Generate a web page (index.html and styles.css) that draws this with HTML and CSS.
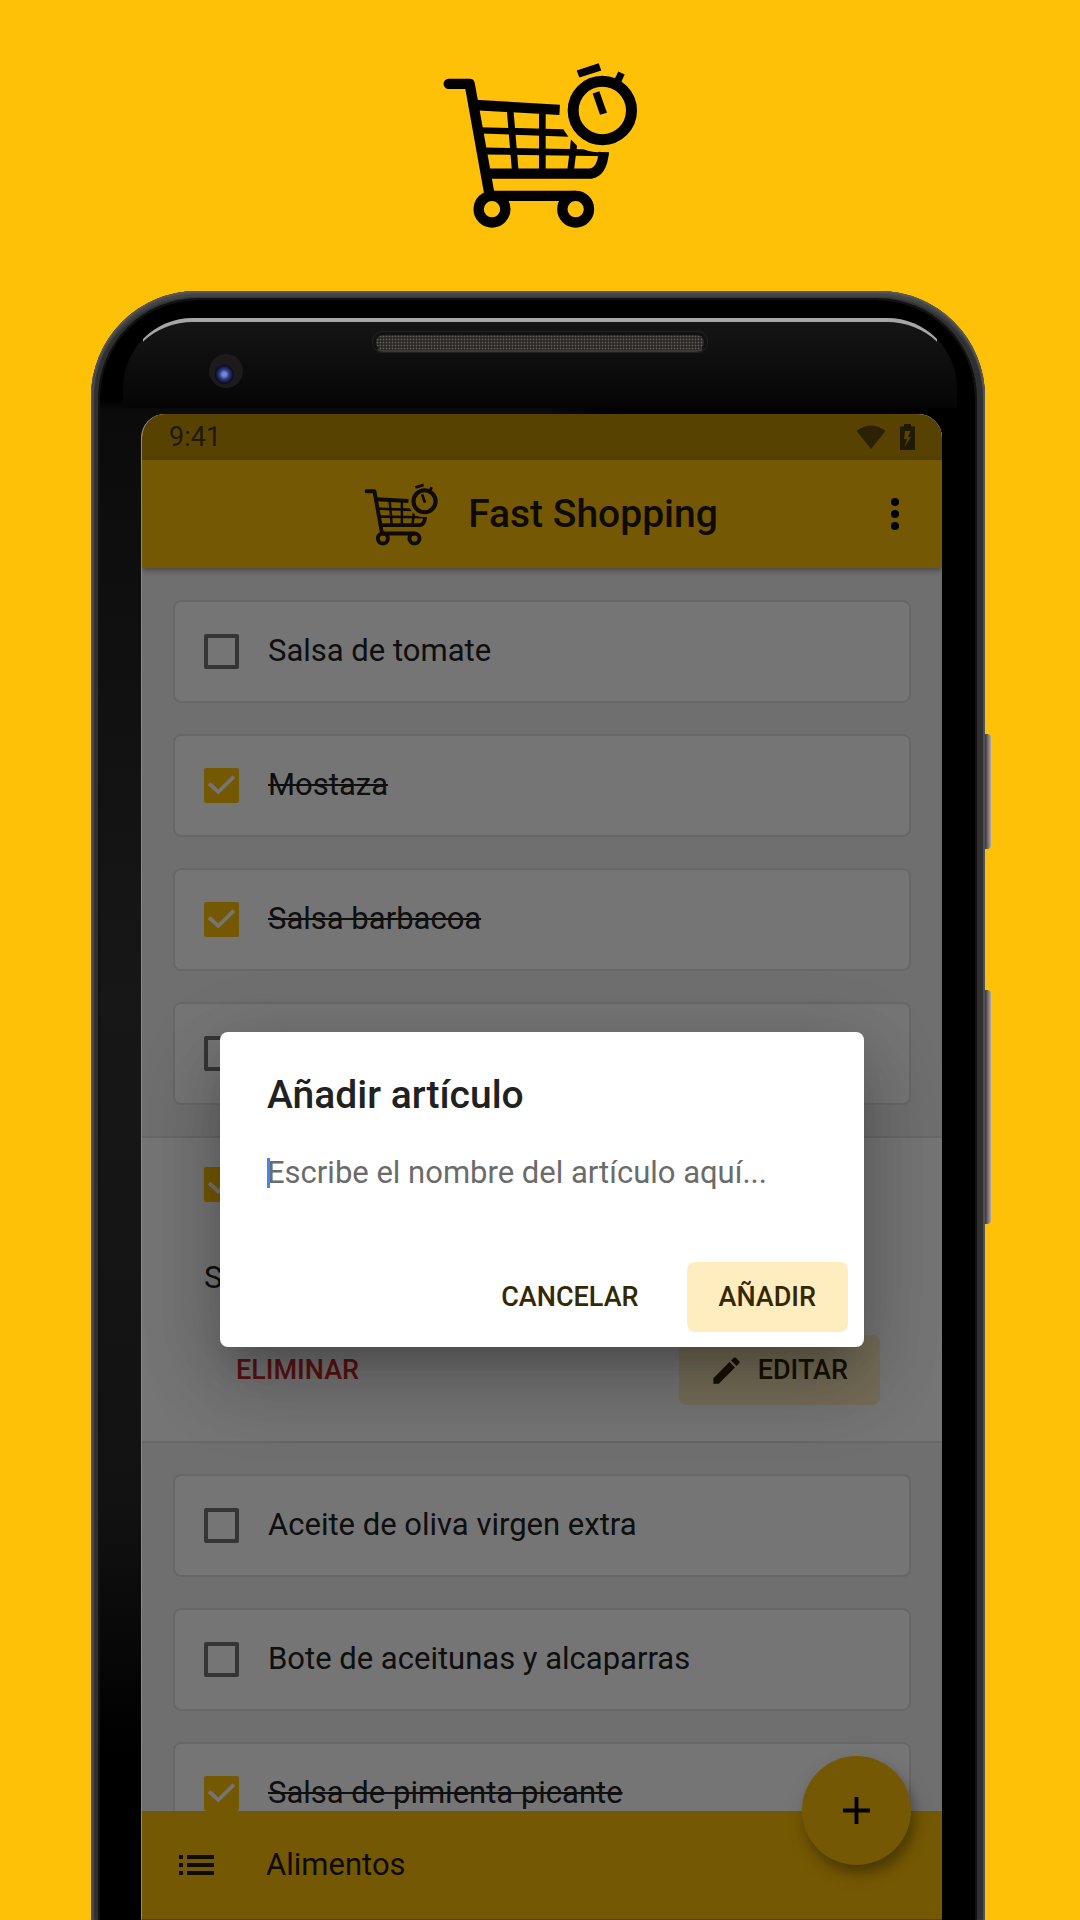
FILE: index.html
```html
<!DOCTYPE html>
<html lang="es">
<head>
<meta charset="utf-8">
<meta name="viewport" content="width=device-width, initial-scale=1">
<title>Fast Shopping</title>
<link rel="stylesheet" href="styles.css">
</head>
<body>
<svg class="defs" aria-hidden="true">
  <symbol id="cart" viewBox="66 36 588 500">
    <g fill="none" stroke="currentColor" stroke-width="31">
      <path d="M86 101H149L207 425" stroke-linecap="round" stroke-linejoin="round"/>
      <path d="M165 164.500L419 179"/>
      <path d="M205 370.500H512Q547 364 551 306"/>
      <path d="M207 437H467"/>
      <circle cx="216" cy="477" r="40"/>
      <circle cx="467" cy="477" r="40"/>
      <circle cx="547" cy="181" r="87.500" stroke-width="33"/>
      <path d="M270 175L286 365M367 180V365" stroke-width="20"/>
    </g>
    <g fill="currentColor">
      <path d="M180 231L430 237L445 260L183 250Z"/>
      <path d="M195 292L490 297Q525 310 567 306L565 318L198 313Z"/>
      <path d="M453 268L471 287L462 360H442Z"/>
      <path d="M470 61L536 39L544 61L478 82Z"/>
      <path d="M595 64L614 73L602 99L582 90Z"/>
      <path d="M518 130L538 123L561 188L540 194Z"/>
    </g>
  </symbol>
</svg>

<header class="brand">
  <svg class="brand-logo" role="img" aria-label="Fast Shopping"><use href="#cart"/></svg>
</header>

<div class="phone">
  <span class="side-key side-key-power"></span>
  <span class="side-key side-key-volume"></span>
  <div class="bezel">
    <div class="glass">
      <span class="speaker"></span>
      <span class="camera"></span>
    </div>

    <div class="screen">
      <div class="status">
        <span>9:41</span>
        <span class="status-icons">
          <svg width="30" height="24" viewBox="0 0 30 24"><path d="M0.500 6Q15-5 29.500 6L15 24Z" fill="currentColor" opacity=".8"/></svg>
          <svg width="15" height="26" viewBox="0 0 15 26"><path fill="currentColor" fill-rule="evenodd" d="M4 0H11V2.500H15V26H0V2.500H4ZM5 7L4 15H7L4.500 23L11 13H8L10.500 7Z"/></svg>
        </span>
      </div>

      <div class="appbar">
        <div class="appbar-title">
          <svg class="appbar-logo" aria-hidden="true"><use href="#cart"/></svg>
          <h1>Fast Shopping</h1>
        </div>
        <button class="menu" aria-label="Más opciones">
          <svg width="8" height="32" viewBox="0 0 8 32"><g fill="currentColor"><circle cx="4" cy="4" r="4"/><circle cx="4" cy="16" r="4"/><circle cx="4" cy="28" r="4"/></g></svg>
        </button>
      </div>

      <ul class="list">
        <li class="card"><label><input type="checkbox"><span>Salsa de tomate</span></label></li>
        <li class="card"><label><input type="checkbox" checked><span>Mostaza</span></label></li>
        <li class="card"><label><input type="checkbox" checked><span>Salsa barbacoa</span></label></li>
        <li class="card"><label><input type="checkbox" aria-label="Artículo"></label></li>
        <li class="open-item">
          <label><input type="checkbox" checked aria-label="Artículo"></label>
          <p>S</p>
          <div class="open-actions">
            <button class="btn btn-danger">ELIMINAR</button>
            <button class="btn btn-tonal btn-icon">
              <svg width="35" height="35" viewBox="0 0 24 24"><path fill="currentColor" d="M3 17.250V21h3.750L17.810 9.940l-3.750-3.750L3 17.250zM20.710 7.040a1 1 0 0 0 0-1.410l-2.340-2.340a1 1 0 0 0-1.410 0l-1.830 1.830 3.750 3.750 1.830-1.830z"/></svg>
              EDITAR
            </button>
          </div>
        </li>
        <li class="card"><label><input type="checkbox"><span>Aceite de oliva virgen extra</span></label></li>
        <li class="card"><label><input type="checkbox"><span>Bote de aceitunas y alcaparras</span></label></li>
        <li class="card"><label><input type="checkbox" checked><span>Salsa de pimienta picante</span></label></li>
      </ul>

      <div class="bottombar">
        <svg width="35" height="20" viewBox="0 0 35 20"><path fill="currentColor" d="M0 0H4V4H0ZM8 0H35V4H8ZM0 8H4V12H0ZM8 8H35V12H8ZM0 16H4V20H0ZM8 16H35V20H8Z"/></svg>
        <span>Alimentos</span>
        <button class="fab" aria-label="Añadir artículo">
          <svg width="27" height="27" viewBox="0 0 28 28"><path d="M14 0V28M0 14H28" stroke="currentColor" stroke-width="4"/></svg>
        </button>
      </div>

      <div class="scrim">
        <form class="dialog" role="dialog" aria-labelledby="dialog-title">
          <h2 id="dialog-title">Añadir artículo</h2>
          <div class="field">
            <span class="caret"></span>
            <input type="text" aria-labelledby="dialog-title" placeholder="Escribe el nombre del artículo aquí...">
          </div>
          <div class="dialog-actions">
            <button type="button" class="btn">CANCELAR</button>
            <button type="button" class="btn btn-tonal">AÑADIR</button>
          </div>
        </form>
      </div>
    </div>
  </div>
</div>
</body>
</html>
```

FILE: styles.css
```css
:root {
  --amber: #ffc107;
  --ink: #212121;
  --line: #e0e0e0;
}

* {
  box-sizing: border-box;
}

body {
  margin: 0;
  height: 100vh;
  display: flex;
  flex-direction: column;
  overflow: hidden;
  background: var(--amber);
  color: var(--ink);
  font-family: Roboto, "Noto Sans", sans-serif;
  font-size: 31px;
  line-height: 40px;
}

h1, h2, p, ul {
  margin: 0;
  padding: 0;
}

h1, h2 {
  font-size: 39px;
  font-weight: 500;
  line-height: 48px;
}

button {
  border: 0;
  background: none;
  font-family: inherit;
  cursor: pointer;
}

svg {
  display: block;
  flex: none;
}

.defs {
  position: absolute;
  width: 0;
  height: 0;
}

.brand {
  display: flex;
  justify-content: center;
  padding: 62px 0;
  color: #000;
}

.brand-logo {
  width: 196px;
  height: 167px;
}

/* Handset */

.phone {
  position: relative;
  flex: 1;
  min-height: 0;
  display: flex;
  margin: 0 95px 0 91px;
  padding: 9px 10px 0 9px;
  border-radius: 106px 106px 0 0;
  background: #303032;
  box-shadow: inset 0 2px 1px #55585a, inset 3px 0 1px #4a4a4a, inset -2px 0 1px #555, inset 0 6px 2px #454647;
}

.side-key {
  position: absolute;
  right: -6px;
  width: 6px;
  border-radius: 0 4px 4px 0;
  background: linear-gradient(90deg, #3a3236, #b8a8a8);
}

.side-key-power {
  top: 443px;
  height: 115px;
}

.side-key-volume {
  top: 699px;
  height: 234px;
}

.bezel {
  flex: 1;
  min-height: 0;
  display: flex;
  flex-direction: column;
  border-radius: 98px 98px 0 0;
  background: linear-gradient(90deg, transparent 50%, #000 60%), linear-gradient(#000 100px, #0b0b0b 110px, #171717 700px, #121212 1200px, #000 1450px);
  box-shadow: 0 0 0 2px #111;
}

.glass {
  position: relative;
  display: flex;
  justify-content: center;
  height: 90px;
  margin: 18px 18px 6px 23px;
  border-radius: 70px 70px 0 0;
  background: linear-gradient(#161616, #050505);
}

.glass::before {
  content: "";
  position: absolute;
  inset: 0;
  border-top: 4px solid #a6a6a6;
  border-radius: 70px 70px 0 0;
  clip-path: inset(0 20px);
}

.speaker {
  width: 334px;
  height: 20px;
  margin-top: 14px;
  border: 3px solid #121212;
  border-bottom: 2px solid #3b3835;
  border-radius: 10px;
  background: radial-gradient(circle, #66605a 0, #12110f 2px) 0 0 / 3px 3px;
  box-shadow: 0 0 0 1px #222;
}

.camera {
  position: absolute;
  left: 86px;
  top: 36px;
  width: 34px;
  height: 34px;
  border-radius: 50%;
  background: radial-gradient(circle at 45% 60%, #7585d0 0 2px, #2c3a86 5px, #0a0c1c 9px, #1c1a1c 10px);
}

/* App */

.screen {
  position: relative;
  flex: 1;
  min-height: 0;
  display: flex;
  flex-direction: column;
  margin: 0 33px 0 41px;
  border-bottom: 1px solid #574303;
  border-left: 1px solid #8a8a8a;
  border-radius: 24px 24px 0 0;
  background: #f1f1f1;
  overflow: hidden;
}

.status {
  display: flex;
  justify-content: space-between;
  align-items: center;
  height: 46px;
  padding: 0 27px;
  background: #bf9105;
  color: #483706;
  font-size: 27px;
}

.status-icons {
  display: flex;
  align-items: center;
  gap: 14px;
}

.appbar {
  position: relative;
  display: flex;
  justify-content: center;
  align-items: center;
  height: 108px;
  background: var(--amber);
  color: #211900;
  box-shadow: 0 2px 6px rgba(0, 0, 0, .4);
}

.appbar-title {
  display: flex;
  align-items: center;
  gap: 30px;
  padding-right: 2px;
}

.appbar-logo {
  width: 74px;
  height: 63px;
}

.menu {
  position: absolute;
  right: 30px;
  padding: 8px 13px;
  color: #000;
}

.list {
  flex: 1;
  min-height: 0;
  display: flex;
  flex-direction: column;
  gap: 31px;
  padding: 32px 0 0;
  overflow: hidden;
  list-style: none;
}

.card {
  flex: none;
  height: 103px;
  margin: 0 31px;
  padding: 0 29px;
  border: 2px solid var(--line);
  border-radius: 8px;
  background: #fff;
}

.card label {
  display: flex;
  align-items: center;
  gap: 29px;
  height: 98px;
}

input[type="checkbox"] {
  appearance: none;
  flex: none;
  display: block;
  width: 35px;
  height: 35px;
  margin: 0;
  border: 4px solid #757575;
  border-radius: 2px;
}

input[type="checkbox"]:checked {
  border: 0;
  background: var(--amber);
}

input[type="checkbox"]:checked::before {
  content: "";
  display: block;
  width: 35px;
  height: 35px;
  background: #fff;
  clip-path: polygon(11% 50%, 19% 42%, 41% 63%, 82% 22%, 89% 30%, 41% 77%);
}

input:checked + span {
  text-decoration: line-through;
  text-decoration-thickness: 2px;
}

.open-item {
  flex: none;
  padding: 29px 62px 36px;
  border: solid var(--line);
  border-width: 2px 0;
  background: #fff;
}

.open-item p {
  margin: 56px 0 37px;
}

.open-actions {
  display: flex;
  justify-content: space-between;
}

.btn {
  display: flex;
  align-items: center;
  height: 70px;
  padding: 0 32px;
  border-radius: 8px;
  color: #332800;
  font-size: 27px;
  font-weight: 500;
  line-height: 32px;
}

.btn-tonal {
  background: #ffedc0;
}

.btn-danger {
  color: #c62828;
}

.btn-icon {
  gap: 14px;
  padding-left: 30px;
}

.bottombar {
  position: relative;
  display: flex;
  align-items: center;
  gap: 52px;
  height: 108px;
  padding: 0 37px;
  background: var(--amber);
  color: #211900;
}

.fab {
  position: absolute;
  top: -55px;
  right: 31px;
  display: grid;
  place-items: center;
  width: 109px;
  height: 109px;
  border-radius: 50%;
  background: var(--amber);
  color: #000;
  box-shadow: 4px 8px 12px rgba(0, 0, 0, .28), 2px 10px 28px rgba(0, 0, 0, .12);
}

/* Dialog */

.scrim {
  position: absolute;
  inset: 0;
  display: grid;
  align-items: center;
  padding: 45px 78px 0;
  background: rgba(0, 0, 0, .54);
}

.dialog {
  padding: 39px 16px 15px 47px;
  border-radius: 8px;
  background: #fff;
  box-shadow: 0 22px 30px -14px rgba(0, 0, 0, .2), 0 40px 76px 6px rgba(0, 0, 0, .14), 0 18px 80px 8px rgba(0, 0, 0, .12);
}

.field {
  position: relative;
  margin: 34px 0 69px;
}

.field input {
  display: block;
  width: 100%;
  height: 40px;
  padding: 0;
  border: 0;
  outline: 0;
  background: none;
  color: var(--ink);
  font: inherit;
}

.field input::placeholder {
  color: #6b6b6b;
  opacity: 1;
}

.caret {
  position: absolute;
  top: 5px;
  left: 0;
  width: 3px;
  height: 30px;
  background: #4285f4;
}

.dialog-actions {
  display: flex;
  justify-content: flex-end;
  gap: 16px;
}
```
